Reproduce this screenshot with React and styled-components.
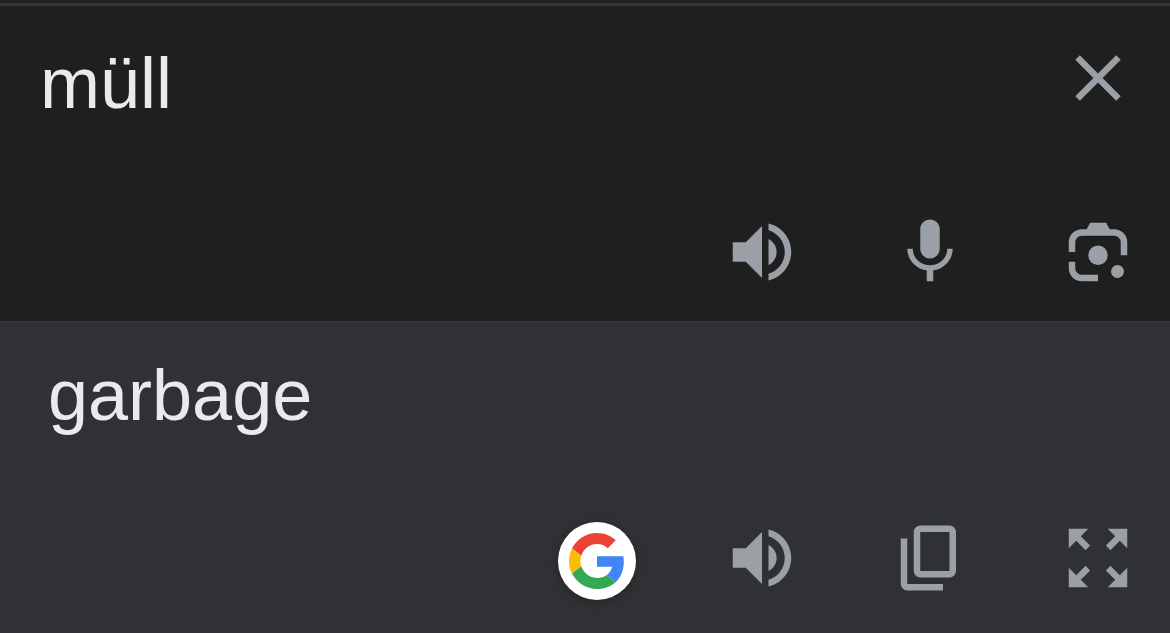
import React, { useState } from 'react'
import styled, { createGlobalStyle } from 'styled-components'

const GlobalStyle = createGlobalStyle`
  *, *::before, *::after {
    box-sizing: border-box;
  }

  body {
    margin: 0;
    background: #303134;
    font-family: "Liberation Sans", Arial, sans-serif;
  }
`;

const Page = styled.main`
  display: flex;
  flex-direction: column;
  min-height: 100vh;
  padding-top: 3px;
  background: #202020;
  color: #e8eaed;
`;

const SourcePanel = styled.section`
  display: flex;
  flex-direction: column;
  gap: 86px;
  padding: 33px 33px 30px 40px;
  border-top: 3px solid #35363a;
  background: #1f1f1f;
`;

const TargetPanel = styled.section`
  display: flex;
  flex: 1;
  flex-direction: column;
  gap: 80px;
  padding: 28px 33px 33px 48px;
  border-top: 2px solid #353638;
  background: #303134;
`;

const SourceRow = styled.div`
  display: flex;
  align-items: flex-start;
  gap: 24px;
`;

const SourceInput = styled.input`
  flex: 1;
  min-width: 0;
  height: 88px;
  padding: 0;
  border: 0;
  outline: 0;
  background: transparent;
  color: inherit;
  font-family: inherit;
  font-size: 72px;
  line-height: 88px;
`;

const Translation = styled.p`
  margin: 0;
  font-size: 72px;
  line-height: 88px;
  overflow-wrap: anywhere;
`;

const Actions = styled.div`
  display: flex;
  justify-content: flex-end;
  align-items: flex-end;
  gap: 87px;
`;

const Toolbar = styled.div`
  display: flex;
  gap: 90px;
  padding-bottom: ${({ $raised }) => ($raised ? '3px' : '0')};
`;

const IconButton = styled.button`
  display: flex;
  flex: none;
  padding: 0;
  border: 0;
  background: transparent;
  color: #9aa0a6;
  cursor: pointer;

  &:hover {
    color: #e8eaed;
  }
`;

const Icon = styled.svg`
  display: block;
  width: 78px;
  height: 78px;
  fill: currentColor;
`;

const GoogleLink = styled.a`
  display: flex;
  flex: none;
  align-items: center;
  justify-content: center;
  width: 78px;
  height: 78px;
  border-radius: 50%;
  background: #fff;
  box-shadow: 0 2px 10px rgba(0, 0, 0, 0.25);
`;

const GoogleMark = styled.svg`
  display: block;
  width: 56px;
  height: 56px;
`;

const icons = {
  close: 'M19 6.41L17.59 5 12 10.59 6.41 5 5 6.41 10.59 12 5 17.59 6.41 19 12 13.41 17.59 19 19 17.59 13.41 12z',
  speaker: 'M3 9v6h4l5 5V4L7 9H3zm13.5 3c0-1.77-1.02-3.29-2.5-4.03v8.05c1.48-.73 2.5-2.25 2.5-4.02zM14 3.23v2.06c2.89.86 5 3.54 5 6.71s-2.11 5.85-5 6.71v2.06c4.01-.91 7-4.49 7-8.77s-2.99-7.86-7-8.77z',
  mic: 'M12 14c1.66 0 2.99-1.34 2.99-3L15 5c0-1.66-1.34-3-3-3S9 3.34 9 5v6c0 1.66 1.34 3 3 3zm5.3-3c0 3-2.54 5.1-5.3 5.1S6.7 14 6.7 11H5c0 3.41 2.72 6.23 6 6.72V21h2v-3.28c3.28-.48 6-3.3 6-6.72h-1.7z',
  lens: 'M9.6 3h4.9l1.1 2H17a4 4 0 0 1 4 4v4h-2V9a2 2 0 0 0-2-2H7a2 2 0 0 0-2 2v3H3V9a4 4 0 0 1 4-4h1.5zM3 15h2v2a2 2 0 0 0 2 2h5v2H7a4 4 0 0 1-4-4zM12 10a3 3 0 1 1 0 6 3 3 0 0 1 0-6zM18 16a2 2 0 1 1 0 4 2 2 0 0 1 0-4z',
  copy: 'M18 2H9a2 2 0 0 0-2 2v12a2 2 0 0 0 2 2h9a2 2 0 0 0 2-2V4a2 2 0 0 0-2-2zm0 14H9V4h9zM3 6h2v14h11v2H5a2 2 0 0 1-2-2z',
  expand: 'M15 3l2.3 2.3-2.89 2.87 1.42 1.42L18.7 6.7 21 9V3zM3 9l2.3-2.3 2.87 2.89 1.42-1.42L6.7 5.3 9 3H3zm6 12l-2.3-2.3 2.89-2.87-1.42-1.42L5.3 17.3 3 15v6zm12-6l-2.3 2.3-2.87-2.89-1.42 1.42 2.89 2.87L15 21h6z',
};

const sourceTools = [
  { icon: 'speaker', label: 'Listen to source text' },
  { icon: 'mic', label: 'Translate by voice' },
  { icon: 'lens', label: 'Translate with camera' },
];

const targetTools = [
  { icon: 'speaker', label: 'Listen to translation' },
  { icon: 'copy', label: 'Copy translation' },
  { icon: 'expand', label: 'Show full screen' },
];

const ToolButton = ({ icon, label, onClick }) => (
  <IconButton type="button" aria-label={label} onClick={onClick}>
    <Icon viewBox="0 0 24 24" aria-hidden="true">
      <path fillRule="evenodd" d={icons[icon]} />
    </Icon>
  </IconButton>
)

const GoogleLogo = () => (
  <GoogleMark viewBox="0 0 48 48" aria-hidden="true">
    <path fill="#ea4335" d="M24 9.5c3.54 0 6.71 1.22 9.21 3.6l6.85-6.85C35.9 2.38 30.47 0 24 0 14.62 0 6.51 5.38 2.56 13.22l7.98 6.19C12.43 13.72 17.74 9.5 24 9.5z" />
    <path fill="#4285f4" d="M46.98 24.55c0-1.57-.15-3.09-.38-4.55H24v9.02h12.94c-.58 2.96-2.26 5.48-4.78 7.18l7.73 6c4.51-4.18 7.09-10.36 7.09-17.65z" />
    <path fill="#fbbc05" d="M10.53 28.59c-.48-1.45-.76-2.99-.76-4.59s.27-3.14.76-4.59l-7.98-6.19C.92 16.46 0 20.12 0 24c0 3.88.92 7.54 2.56 10.78l7.97-6.19z" />
    <path fill="#34a853" d="M24 48c6.48 0 11.93-2.13 15.89-5.81l-7.73-6c-2.15 1.45-4.92 2.3-8.16 2.3-6.26 0-11.57-4.22-13.47-9.91l-7.98 6.19C6.51 42.62 14.62 48 24 48z" />
  </GoogleMark>
)

const App = () => {
  const [text, setText] = useState('müll')

  return (
    <>
      <GlobalStyle />
      <Page>
        <SourcePanel>
          <SourceRow>
            <SourceInput
              type="text"
              aria-label="Source text"
              spellCheck={false}
              value={text}
              onChange={(e) => setText(e.target.value)}
            />
            <ToolButton icon="close" label="Clear source text" onClick={() => setText('')} />
          </SourceRow>
          <Actions>
            <Toolbar>
              {sourceTools.map((tool) => (
                <ToolButton key={tool.icon} {...tool} />
              ))}
            </Toolbar>
          </Actions>
        </SourcePanel>

        <TargetPanel>
          <Translation lang="en">garbage</Translation>
          <Actions>
            <GoogleLink href="#search" aria-label="Search with Google">
              <GoogleLogo />
            </GoogleLink>
            <Toolbar $raised>
              {targetTools.map((tool) => (
                <ToolButton key={tool.icon} {...tool} />
              ))}
            </Toolbar>
          </Actions>
        </TargetPanel>
      </Page>
    </>
  )
}

export default App
